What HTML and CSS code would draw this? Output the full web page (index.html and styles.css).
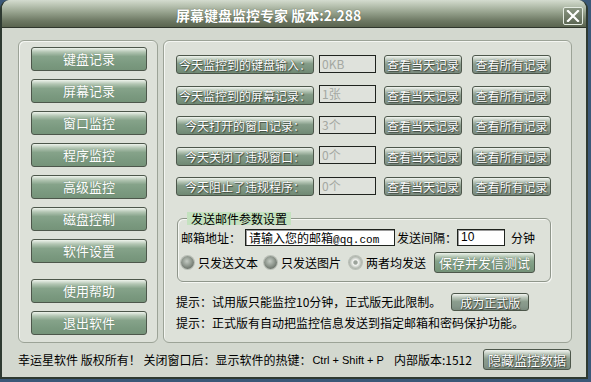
FILE: index.html
```html
<!DOCTYPE html>
<html lang="zh-CN">
<head>
<meta charset="utf-8">
<title>屏幕键盘监控专家</title>
<link rel="stylesheet" href="styles.css">
</head>
<body>
<div class="win">
  <div class="titlebar">
    <span class="title">屏幕键盘监控专家 版本:2.288</span>
    <span class="close"><svg width="14" height="12" viewBox="0 0 14 12"><path d="M2 1 L12 11 M12 1 L2 11" stroke="#fff" stroke-width="2.2" fill="none" stroke-linecap="square"/></svg></span>
  </div>
  <div class="main">
    <div class="panel nav">
      <button class="btn navbtn">键盘记录</button>
      <button class="btn navbtn">屏幕记录</button>
      <button class="btn navbtn">窗口监控</button>
      <button class="btn navbtn">程序监控</button>
      <button class="btn navbtn">高级监控</button>
      <button class="btn navbtn">磁盘控制</button>
      <button class="btn navbtn">软件设置</button>
      <button class="btn navbtn sep">使用帮助</button>
      <button class="btn navbtn">退出软件</button>
    </div>
    <div class="panel content">
      <div class="stats">
        <div class="row">
          <span class="btn label">今天监控到的键盘输入：</span>
          <span class="val">0KB</span>
          <span class="btn small">查看当天记录</span>
          <span class="btn small all">查看所有记录</span>
        </div>
        <div class="row">
          <span class="btn label">今天监控到的屏幕记录：</span>
          <span class="val">1张</span>
          <span class="btn small">查看当天记录</span>
          <span class="btn small all">查看所有记录</span>
        </div>
        <div class="row">
          <span class="btn label">今天打开的窗口记录：</span>
          <span class="val">3个</span>
          <span class="btn small">查看当天记录</span>
          <span class="btn small all">查看所有记录</span>
        </div>
        <div class="row">
          <span class="btn label">今天关闭了违规窗口：</span>
          <span class="val">0个</span>
          <span class="btn small">查看当天记录</span>
          <span class="btn small all">查看所有记录</span>
        </div>
        <div class="row">
          <span class="btn label">今天阻止了违规程序：</span>
          <span class="val">0个</span>
          <span class="btn small">查看当天记录</span>
          <span class="btn small all">查看所有记录</span>
        </div>
      </div>
      <fieldset class="group">
        <legend class="legend">发送邮件参数设置</legend>
        <div class="mailrow">
          <span class="txt">邮箱地址：</span>
          <span class="input email">请输入您的邮箱<span class="mono">@qq.com</span></span>
          <span class="txt gap2">发送间隔：</span>
          <span class="input interval">10</span>
          <span class="txt unit">分钟</span>
        </div>
        <div class="radiorow">
          <span class="radio"></span><span class="txt rl">只发送文本</span>
          <span class="radio r2"></span><span class="txt rl">只发送图片</span>
          <span class="radio r3 on"></span><span class="txt rl">两者均发送</span>
          <span class="btn save">保存并发信测试</span>
        </div>
      </fieldset>
      <div class="hint first">
        <span class="txt">提示：试用版只能监控10分钟，正式版无此限制。</span>
        <span class="btn small reg">成为正式版</span>
      </div>
      <div class="hint">
        <span class="txt">提示：正式版有自动把监控信息发送到指定邮箱和密码保护功能。</span>
      </div>
    </div>
  </div>
  <div class="footer">
    <span class="txt">幸运星软件 版权所有！ 关闭窗口后：显示软件的热键：</span><span class="latin">Ctrl + Shift + P</span><span class="txt ver">内部版本:1512</span>
    <span class="btn small hide">隐藏监控数据</span>
  </div>
</div>
</body>
</html>
```

FILE: styles.css
```css
html, body {
  margin: 0;
  padding: 0;
  background: #3b5878;
}
body {
  width: 591px;
  height: 382px;
  overflow: hidden;
  font-family: "Noto Sans CJK SC", "Liberation Sans", sans-serif;
  font-size: 12px;
  color: #000;
}
.win {
  width: 588px;
  height: 379px;
  box-sizing: border-box;
  border: 2px solid #2e3a31;
  border-top: none;
  border-radius: 9px 9px 0 0;
  background: #d3d8cf;
  display: flex;
  flex-direction: column;
  overflow: hidden;
}
.titlebar {
  height: 27px;
  flex: none;
  display: flex;
  align-items: center;
  background: linear-gradient(#d4dccf 0%, #bcc6b5 18%, #939f8a 48%, #6c7762 78%, #5a644f 100%);
  border-bottom: 1px solid #2f362c;
  border-radius: 8px 8px 0 0;
}
.title {
  padding-left: 174px;
  color: #fff;
  font-weight: bold;
  font-size: 14px;
  line-height: 16px;
  margin-top: 2px;
  text-shadow: 0 0 1px #4a5442;
}
.close {
  margin-left: auto;
  margin-right: 3px;
  align-self: flex-start;
  margin-top: 7px;
  width: 18px;
  height: 16px;
  border: 1px solid #e4ebe1;
  border-radius: 2px;
  background: linear-gradient(#8a9682, #5c6753);
  display: flex;
  align-items: center;
  justify-content: center;
}
.main {
  display: flex;
  gap: 5px;
  padding: 12px 14px 0 16px;
  height: 303px;
}
.panel {
  box-sizing: border-box;
  height: 303px;
  border: 1px solid #9ca397;
  border-radius: 6px;
  background: #dde1d9;
  box-shadow: inset 1px 1px 0 #f4f6f2;
}
.nav {
  width: 140px;
  padding: 6px 0 0 12px;
  display: flex;
  flex-direction: column;
  gap: 8px;
}
.btn {
  box-sizing: border-box;
  display: flex;
  align-items: center;
  justify-content: center;
  border: 1px solid #4d574b;
  border-radius: 3px;
  background: linear-gradient(#eef3ec 0%, #b3c6b3 18%, #86a38a 38%, #7b9a80 70%, #759379 100%);
  color: #fff;
  font-family: "Noto Sans CJK SC", sans-serif;
  white-space: nowrap;
  padding: 0;
}
.navbtn {
  width: 116px;
  height: 24px;
  font-size: 13px;
  line-height: 14px;
  text-shadow: 0 0 1px #5d7762;
}
.navbtn.sep {
  margin-top: 8px;
}
.content {
  width: 409px;
  padding: 14px 0 0 12px;
  display: flex;
  flex-direction: column;
}
.stats {
  display: flex;
  flex-direction: column;
  gap: 11.5px;
}
.row {
  display: flex;
  align-items: center;
  height: 19px;
}
.label {
  width: 138px;
  height: 19px;
  font-size: 12px;
  line-height: 13px;
  text-shadow: 0 0 1px #2f3a2f, 1px 1px 1px #3f4a3f;
  background: linear-gradient(#f0f4ee 0%, #b8c8b8 22%, #849c88 45%, #7a937e 75%, #6f8873 100%);
}
.val {
  box-sizing: border-box;
  width: 57px;
  height: 18px;
  margin-left: 5px;
  margin-top: -2px;
  border: 1px solid #1f231e;
  background: #dfe2dc;
  color: #a4a8a2;
  font-size: 12px;
  line-height: 16px;
  padding-left: 2px;
}
.small {
  width: 78px;
  height: 19px;
  font-size: 12px;
  line-height: 13px;
  text-shadow: 0 0 1px #2b332b, 1px 1px 1px #3b443b;
  background: linear-gradient(#f2f5f0 0%, #bcc8bc 22%, #8b9d8d 48%, #86978a 75%, #7a8b7e 100%);
}
.row .small {
  margin-left: 8px;
}
.row .small.all {
  margin-left: 10px;
  width: 79px;
}
.group {
  margin: 16px 0 0 1px;
  width: 374px;
  box-sizing: border-box;
  height: 70px;
  border: 1px solid #8f968b;
  border-radius: 6px;
  box-shadow: inset 1px 1px 0 #f5f7f3, 1px 1px 0 #f5f7f3;
  padding: 4px 0 0 3px;
  margin-inline: 0;
  margin-left: 1px;
  min-width: 0;
}
.legend {
  margin-left: 6px;
  padding: 0 4px;
  background: #c4e2bf;
  font-size: 12px;
  line-height: 13px;
  height: 13px;
}
.txt {
  font-size: 12px;
  line-height: 14px;
  white-space: nowrap;
}
.mailrow {
  display: flex;
  align-items: center;
  height: 17px;
}
.input {
  box-sizing: border-box;
  height: 17px;
  border: 1px solid #1f231e;
  box-shadow: inset 1px 1px 0 #9a9a9a;
  background: #fff;
  font-size: 12px;
  line-height: 15px;
  padding-left: 3px;
  white-space: nowrap;
  overflow: hidden;
}
.email {
  width: 150px;
  margin-left: 4px;
}
.mono {
  font-family: "Liberation Mono", monospace;
  font-size: 11px;
}
.gap2 {
  margin-left: 2px;
}
.interval {
  width: 48px;
  margin-left: 0;
  font-family: "Liberation Sans", sans-serif;
}
.unit {
  margin-left: 6px;
}
.radiorow {
  display: flex;
  align-items: center;
  height: 21px;
  margin-top: 6px;
}
.radio {
  width: 13px;
  height: 13px;
  border-radius: 50%;
  background: radial-gradient(circle at 45% 40%, #c3cac2 0%, #8f978e 45%, #5e655d 85%);
  box-shadow: 0 0 0 1px #b9beb6;
  flex: none;
}
.radio.on {
  background: radial-gradient(circle at 50% 50%, #9ca39b 0 18%, #f4f5f2 30%, #c3c8c1 55%, #7e857c 90%);
}
.rl {
  margin-left: 4px;
}
.r2 {
  margin-left: 6px;
}
.r3 {
  margin-left: 8px;
}
.save {
  margin-left: 8px;
  width: 101px;
  height: 21px;
  font-size: 13px;
  line-height: 14px;
  text-shadow: 0 0 1px #3a4a3c;
  background: linear-gradient(#eef3ec 0%, #b3c6b3 20%, #86a38a 42%, #7b9a80 72%, #759379 100%);
}
.hint {
  display: flex;
  align-items: center;
  height: 18px;
}
.hint.first {
  margin-top: 11px;
}
.hint + .hint {
  margin-top: 3px;
}
.reg {
  margin-left: 10px;
  height: 18px;
}
.footer {
  display: flex;
  align-items: center;
  height: 21px;
  margin-top: 6px;
  padding: 0 15px 0 16px;
}
.latin {
  font-family: "Liberation Sans", sans-serif;
  font-size: 11px;
  line-height: 14px;
  margin-left: 1px;
  white-space: nowrap;
}
.ver {
  margin-left: 10px;
}
.hide {
  margin-left: auto;
  width: 88px;
  height: 21px;
  font-size: 13px;
}
```
